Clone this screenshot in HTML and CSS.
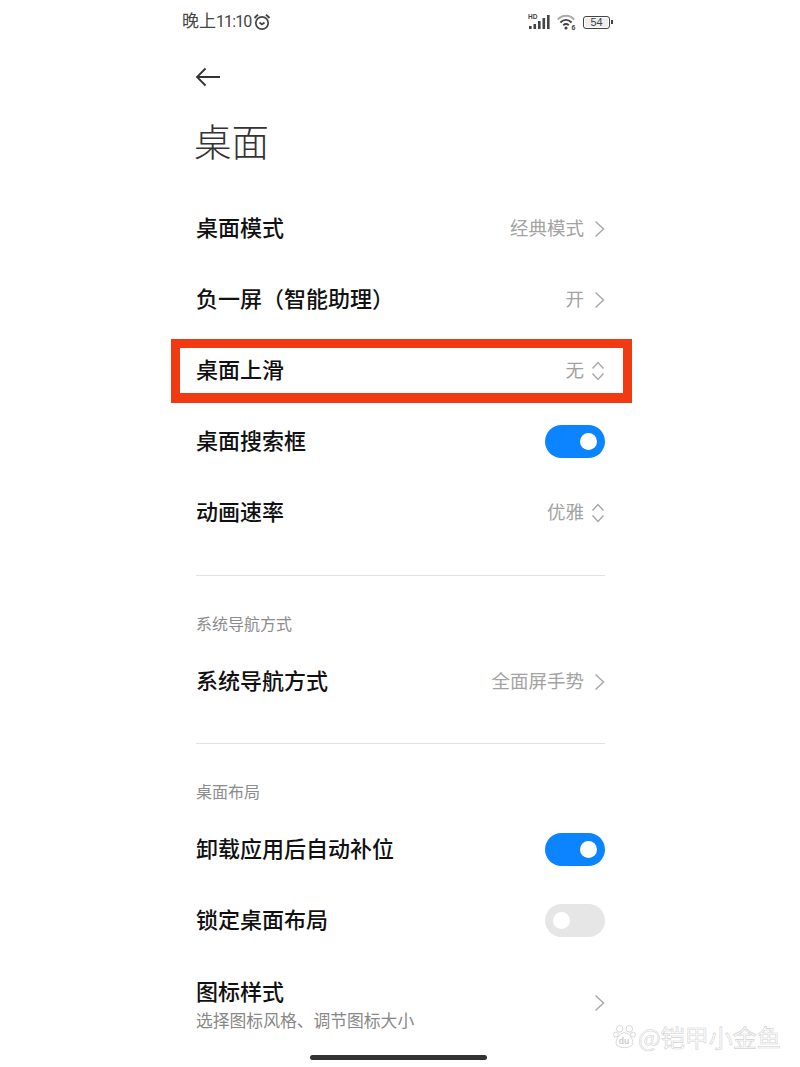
FILE: index.html
```html
<!DOCTYPE html>
<html lang="zh-CN">
<head>
    <meta charset="UTF-8">
    <meta name="viewport" content="width=device-width, initial-scale=1.0">
    <title>桌面</title>
    <link rel="stylesheet" href="styles.css">
</head>
<body>
    <div class="phone">
        <div class="status">
            <div class="status-left">
                <span>晚上<span class="clock">11:10</span></span>
                <svg class="alarm" width="18" height="18" viewBox="0 0 18 18" fill="none" stroke="#444" stroke-width="1.7">
                    <circle cx="9" cy="10" r="6.2"/>
                    <path d="M1.5 5 L5 1.6 M16.5 5 L13 1.6" stroke-width="2"/>
                    <path d="M6.5 9.5 L9 11.5 L11.5 9.5"/>
                </svg>
            </div>
            <div class="status-right">
                <svg width="22" height="16" viewBox="0 0 22 16">
                    <text x="0" y="5" class="hd">HD</text>
                    <rect x="1" y="12" width="2.6" height="3" fill="#444"/>
                    <rect x="5.5" y="10" width="2.6" height="5" fill="#444"/>
                    <rect x="10" y="7" width="2.6" height="8" fill="#444"/>
                    <rect x="14.5" y="4" width="2.6" height="11" fill="#444"/>
                    <rect x="19" y="1" width="2.6" height="14" fill="#444"/>
                </svg>
                <svg class="wifi" width="20" height="16" viewBox="0 0 20 16" fill="none">
                    <path d="M0.8 5.6 C5.5 0.6 12.5 0.6 17.2 5.6" stroke="#aaa" stroke-width="2"/>
                    <path d="M3.4 8.4 C6.8 5.2 11.2 5.2 14.6 8.4" stroke="#444" stroke-width="2"/>
                    <path d="M6.2 11.2 C7.9 9.8 10.1 9.8 11.8 11.2" stroke="#444" stroke-width="2"/>
                    <circle cx="9" cy="14" r="1.6" fill="#444"/>
                    <text x="14.5" y="15.5" class="wifi-six">6</text>
                </svg>
                <div class="battery"><span>54</span></div>
                <div class="battery-nub"></div>
            </div>
        </div>

        <div class="content">
            <div class="back">
                <svg width="26" height="20" viewBox="0 0 26 20" fill="none" stroke="#333" stroke-width="1.8">
                    <path d="M25 10 H2 M10.5 1.5 L2 10 L10.5 18.5"/>
                </svg>
            </div>
            <h1 class="title">桌面</h1>

            <div class="group first">
                <div class="row">
                    <span class="name">桌面模式</span>
                    <div class="right"><span class="value">经典模式</span><svg class="chev" width="11" height="18" viewBox="0 0 11 18"><path d="M1.5 1.5 L9.5 9 L1.5 16.5"/></svg></div>
                </div>
                <div class="row">
                    <span class="name">负一屏（智能助理）</span>
                    <div class="right"><span class="value">开</span><svg class="chev" width="11" height="18" viewBox="0 0 11 18"><path d="M1.5 1.5 L9.5 9 L1.5 16.5"/></svg></div>
                </div>
                <div class="row marked">
                    <span class="name">桌面上滑</span>
                    <div class="right"><span class="value">无</span><svg class="updown" width="14" height="20" viewBox="0 0 14 20"><path d="M1.5 7.5 L7 1.5 L12.5 7.5 M1.5 12.5 L7 18.5 L12.5 12.5"/></svg></div>
                </div>
                <div class="row">
                    <span class="name">桌面搜索框</span>
                    <div class="switch on"></div>
                </div>
                <div class="row">
                    <span class="name">动画速率</span>
                    <div class="right"><span class="value">优雅</span><svg class="updown" width="14" height="20" viewBox="0 0 14 20"><path d="M1.5 7.5 L7 1.5 L12.5 7.5 M1.5 12.5 L7 18.5 L12.5 12.5"/></svg></div>
                </div>
            </div>

            <div class="group">
                <div class="label">系统导航方式</div>
                <div class="row">
                    <span class="name">系统导航方式</span>
                    <div class="right"><span class="value">全面屏手势</span><svg class="chev" width="11" height="18" viewBox="0 0 11 18"><path d="M1.5 1.5 L9.5 9 L1.5 16.5"/></svg></div>
                </div>
            </div>

            <div class="group">
                <div class="label">桌面布局</div>
                <div class="row">
                    <span class="name">卸载应用后自动补位</span>
                    <div class="switch on"></div>
                </div>
                <div class="row">
                    <span class="name">锁定桌面布局</span>
                    <div class="switch"></div>
                </div>
                <div class="row tall">
                    <div>
                        <div class="name">图标样式</div>
                        <div class="sub">选择图标风格、调节图标大小</div>
                    </div>
                    <svg class="chev" width="11" height="18" viewBox="0 0 11 18"><path d="M1.5 1.5 L9.5 9 L1.5 16.5"/></svg>
                </div>
            </div>
        </div>

        <div class="home-bar"></div>
    </div>

    <div class="watermark">
        <svg width="23" height="25" viewBox="0 0 24 26" fill="#fff" stroke="#d6d6d6" stroke-width="1">
            <circle cx="7" cy="5" r="3.4"/>
            <circle cx="17" cy="5" r="3.4"/>
            <circle cx="3" cy="11" r="2.6"/>
            <circle cx="21" cy="11" r="2.6"/>
            <path d="M12 9 C17 9 23 18 20 22 C17 25.5 7 25.5 4 22 C1 18 7 9 12 9 Z"/>
            <text x="6" y="21" class="du">du</text>
        </svg>
        <span>@铠甲小金鱼</span>
    </div>
</body>
</html>
```

FILE: styles.css
```css
body {
    margin: 0;
    background-color: #fff;
    color: #111;
    font-family: "Noto Sans CJK SC", "Noto Sans", sans-serif;
    overflow: hidden;
}
.phone {
    width: 461px;
    height: 1067px;
    margin-left: 171px;
}
.status {
    display: flex;
    justify-content: space-between;
    align-items: center;
    height: 44px;
    padding: 0 19px 0 11px;
    color: #444;
}
.status-left {
    display: flex;
    align-items: center;
    gap: 2px;
    font-size: 17px;
    line-height: 22px;
    padding-bottom: 2px;
}
.clock {
    font-family: Roboto, sans-serif;
    font-size: 16px;
    letter-spacing: -0.9px;
}
.alarm {
    margin-top: 2px;
}
.status-right {
    display: flex;
    align-items: center;
}
.hd {
    font-family: "Liberation Sans", sans-serif;
    font-size: 6.5px;
    font-weight: bold;
    fill: #444;
}
.wifi {
    margin-left: 7px;
}
.wifi-six {
    font-family: "Liberation Sans", sans-serif;
    font-size: 7px;
    font-weight: bold;
    fill: #444;
}
.battery {
    width: 27px;
    height: 13px;
    margin-left: 6px;
    border: 1px solid #444;
    border-radius: 3px;
    box-sizing: border-box;
    display: flex;
    justify-content: center;
    align-items: center;
    font-family: "Liberation Sans", sans-serif;
    font-size: 11px;
    background-color: #eee;
    box-shadow: inset 0 0 0 1px #fff;
}
.battery-nub {
    width: 2px;
    height: 4px;
    margin-left: 1px;
    background-color: #444;
}
.content {
    padding: 0 27px 0 25px;
}
.back {
    display: flex;
    align-items: center;
    height: 66px;
    margin-left: -1px;
}
.title {
    margin: 0 0 0 -2px;
    height: 66px;
    line-height: 60px;
    font-size: 37.5px;
    font-weight: 300;
    color: #333;
}
.group {
    padding-top: 36px;
    padding-bottom: 26px;
    border-bottom: 1px solid #e2e2e2;
}
.group.first {
    padding-top: 17px;
    padding-bottom: 27px;
}
.group:last-child {
    padding-bottom: 0;
    border-bottom: none;
}
.label {
    height: 22px;
    line-height: 22px;
    margin-bottom: 12px;
    font-size: 16px;
    color: #8c8c8c;
}
.row {
    position: relative;
    display: flex;
    justify-content: space-between;
    align-items: center;
    height: 71px;
}
.row.tall {
    height: 94px;
}
.name {
    padding-bottom: 6px;
    font-size: 22px;
    font-weight: 500;
    line-height: 30px;
}
.sub {
    margin-top: -3px;
    font-size: 16.8px;
    line-height: 24px;
    color: #888;
}
.right {
    display: flex;
    align-items: center;
}
.value {
    padding-bottom: 4px;
    font-size: 18.5px;
    color: #a3a3a3;
}
.chev, .updown {
    fill: none;
    stroke: #aaa;
    stroke-width: 1.5;
}
.value + .chev {
    margin-left: 10px;
}
.value + .updown {
    margin-left: 7px;
}
.switch {
    position: relative;
    width: 60px;
    height: 33px;
    border-radius: 17px;
    background-color: #e6e6e6;
}
.switch::after {
    content: "";
    position: absolute;
    top: 8px;
    left: 8px;
    width: 17px;
    height: 17px;
    border-radius: 50%;
    background-color: #fff;
}
.switch.on {
    background-color: #0d84ff;
}
.switch.on::after {
    left: 35px;
}
.marked::after {
    content: "";
    position: absolute;
    top: 4px;
    bottom: 3px;
    left: -25px;
    right: -27px;
    border: 9px solid #f13a12;
    border-bottom-width: 10px;
}
.home-bar {
    width: 177px;
    height: 5px;
    margin: 5px 0 0 139px;
    border-radius: 3px;
    background-color: #333;
}
.watermark {
    position: absolute;
    left: 613px;
    top: 1019px;
    display: flex;
    align-items: center;
    gap: 2px;
    font-size: 24px;
    color: #fff;
    -webkit-text-stroke: 0.6px #d2d2d2;
}
.du {
    font-family: "Liberation Sans", sans-serif;
    font-size: 9px;
    font-weight: bold;
    fill: #ccc;
    stroke: none;
}
```
